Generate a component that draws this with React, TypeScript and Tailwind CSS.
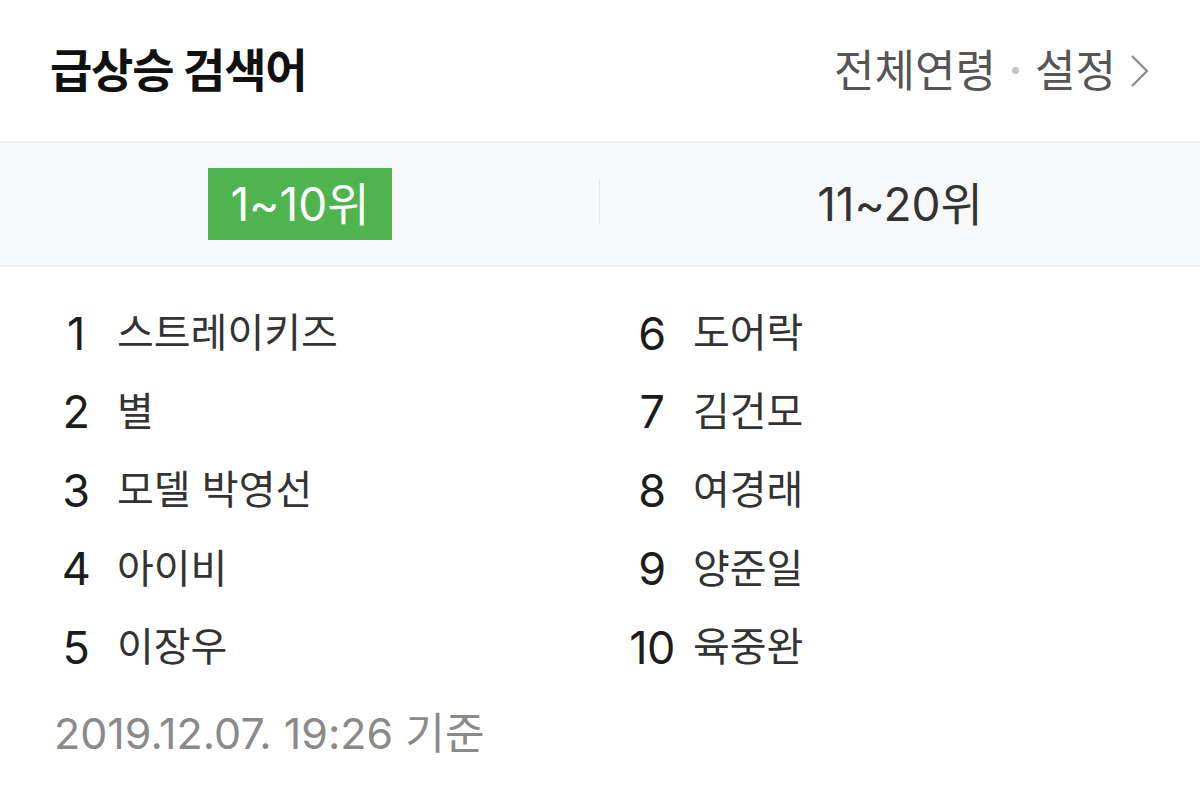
import React from "react";

const left = [
  ["1", "스트레이키즈"],
  ["2", "별"],
  ["3", "모델 박영선"],
  ["4", "아이비"],
  ["5", "이장우"],
];
const right = [
  ["6", "도어락"],
  ["7", "김건모"],
  ["8", "여경래"],
  ["9", "양준일"],
  ["10", "육중완"],
];

const font = { fontFamily: '"Inter", "Noto Sans CJK KR", sans-serif' };

function Col({ items, pl }: { items: string[][]; pl: string }) {
  return (
    <div className={`flex flex-col ${pl}`}>
      {items.map(([n, t]) => (
        <div key={n} className="flex h-[78.5px] items-center">
          <span className="w-[56px] text-center text-[45px] text-[#1c1c1c] tracking-[-0.5px]">{n}</span>
          <span className="ml-[13px] text-[40px] text-[#333333]">{t}</span>
        </div>
      ))}
    </div>
  );
}

export default function App() {
  return (
    <div className="w-[1200px] h-[797px] bg-white overflow-hidden" style={font}>
      <div className="flex h-[141px] items-center justify-between pl-[50px] pr-[50px]">
        <h1 className="text-[46px] font-bold text-[#111111] tracking-[-1.2px]">급상승 검색어</h1>
        <div className="flex items-center text-[44px] text-[#555555]">
          <span>전체연령</span>
          <span className="mx-[16px] h-[7px] w-[7px] rounded-full bg-[#c4c4c4]" />
          <span>설정</span>
          <svg className="ml-[14px]" width="20" height="34" viewBox="0 0 20 34" fill="none">
            <path d="M2 2 L17 17 L2 32" stroke="#8a8a8a" strokeWidth="2.2" />
          </svg>
        </div>
      </div>
      <div className="grid h-[126px] grid-cols-2 items-center border-y-2 border-[#eceef0] bg-[#f7f8fa]">
        <div className="relative flex h-full items-center justify-center">
          <div className="flex h-[72px] w-[184px] items-center justify-center bg-[#4fb44d] text-[46px] text-white">
            1~10위
          </div>
          <span className="absolute right-0 top-[36px] h-[45px] w-[1px] bg-[#e6e7e9]" />
        </div>
        <div className="flex h-full items-center justify-center text-[46px] text-[#333333]">
          11~20위
        </div>
      </div>
      <div className="grid grid-cols-2 pt-[27px]">
        <Col items={left} pl="pl-[48px]" />
        <Col items={right} pl="pl-[24px]" />
      </div>
      <div className="pl-[54px] pt-[14px] text-[43px] text-[#8a8a8a]">2019.12.07. 19:26 기준</div>
    </div>
  );
}
